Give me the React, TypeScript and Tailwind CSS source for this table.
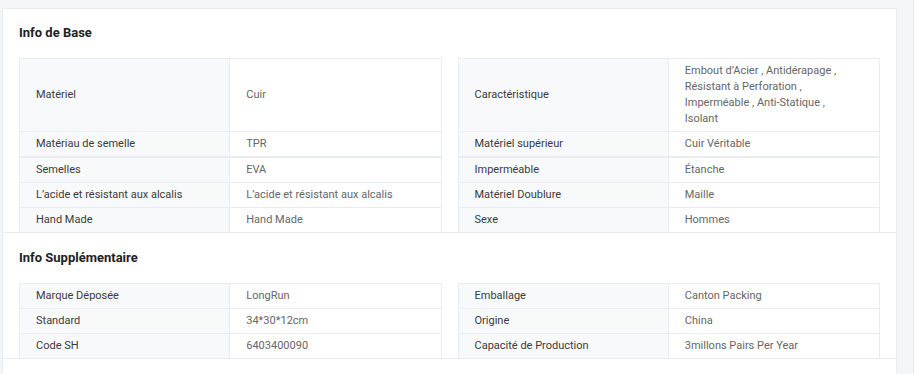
import React from 'react'

type Pair = { label: string; value: React.ReactNode }

const baseLeft: Pair[] = [
  { label: 'Matériel', value: 'Cuir' },
  { label: 'Matériau de semelle', value: 'TPR' },
  { label: 'Semelles', value: 'EVA' },
  { label: 'L\u2019acide et résistant aux alcalis', value: 'L\u2019acide et résistant aux alcalis' },
  { label: 'Hand Made', value: 'Hand Made' },
]

const baseRight: Pair[] = [
  { label: 'Caractéristique', value: 'Embout d\u2019Acier , Antidérapage , Résistant à Perforation , Imperméable , Anti-Statique , Isolant' },
  { label: 'Matériel supérieur', value: 'Cuir Véritable' },
  { label: 'Imperméable', value: 'Étanche' },
  { label: 'Matériel Doublure', value: 'Maille' },
  { label: 'Sexe', value: 'Hommes' },
]

const extraLeft: Pair[] = [
  { label: 'Marque Déposée', value: 'LongRun' },
  { label: 'Standard', value: '34*30*12cm' },
  { label: 'Code SH', value: '6403400090' },
]

const extraRight: Pair[] = [
  { label: 'Emballage', value: 'Canton Packing' },
  { label: 'Origine', value: 'China' },
  { label: 'Capacité de Production', value: '3millons Pairs Per Year' },
]

function Cell({ pair, last, thick }: { pair: Pair; last: boolean; thick: boolean }) {
  return (
    <div
      className={`grid grid-cols-2 border-x border-[#e9ecf0] ${last ? '' : thick ? 'border-b-2' : 'border-b'}`}
    >
      <div className="flex items-center bg-[#f8f9fb] border-r border-[#e9ecf0] px-4 py-1 text-[11px] leading-4 text-[#3a3a3a]">
        {pair.label}
      </div>
      <div className="flex items-center pl-4 pr-[30px] py-1 text-[11px] leading-4 text-[#666]">
        {pair.value}
      </div>
    </div>
  )
}

function Section({
  title,
  left,
  right,
  top,
  thickRow = -1,
}: {
  title: string
  left: Pair[]
  right: Pair[]
  top: string
  thickRow?: number
}) {
  return (
    <section className={`border-b border-[#e9ecf0] px-4 ${top}`}>
      <h2 className="text-[13px] leading-5 font-bold text-[#222] mb-[15px]">{title}</h2>
      <div className="grid grid-cols-2 gap-x-4">
        {left.map((p, i) => (
          <React.Fragment key={p.label + i}>
            <div className={i === 0 ? 'grid border-t border-[#e9ecf0]' : 'grid'}>
              <Cell pair={p} last={i === left.length - 1} thick={i === thickRow} />
            </div>
            <div className={i === 0 ? 'grid border-t border-[#e9ecf0]' : 'grid'}>
              <Cell pair={right[i]} last={i === right.length - 1} thick={i === thickRow} />
            </div>
          </React.Fragment>
        ))}
      </div>
    </section>
  )
}

export default function App() {
  return (
    <div
      className="w-[917px] h-[374px] overflow-hidden bg-[#f4f5f8] flex"
      style={{ fontFamily: 'Roboto, "Liberation Sans", Arial, sans-serif' }}
    >
      <div className="pl-[2px] pt-[8px]">
        <div className="w-[895px] h-[400px] bg-white border border-[#e9ecf0]">
          <Section title="Info de Base" left={baseLeft} right={baseRight} top="pt-[14px]" thickRow={1} />
          <Section title="Info Supplémentaire" left={extraLeft} right={extraRight} top="pt-[15px]" />
        </div>
      </div>
      <div className="ml-auto w-[4px] h-full bg-white border-l border-[#e6e8ee]" />
    </div>
  )
}
